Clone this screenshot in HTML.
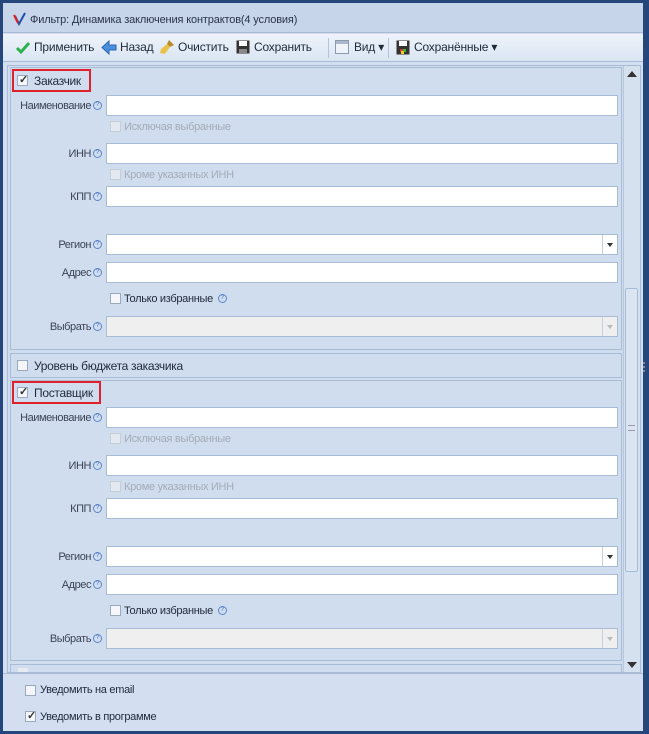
<!DOCTYPE html>
<html><head><meta charset="utf-8"><style>
*{box-sizing:border-box;margin:0;padding:0}
body{width:649px;height:734px;background:#25467a;font-family:"Liberation Sans",sans-serif;font-size:11px;color:#1e2a3a;position:relative;overflow:hidden}
.a{position:absolute}
.win{left:3px;top:3px;width:640px;height:728px;background:#d3dff0}
.inp{position:absolute;left:106px;width:512px;height:21px;background:#fff;border:1px solid #a9bcd6}
.dis{background:#efefef}
.dd{position:absolute;right:0;top:0;width:15px;height:19px;border-left:1px solid #c4d0e0}
.dd:after{content:"";position:absolute;left:4px;top:8px;border-left:3.5px solid transparent;border-right:3.5px solid transparent;border-top:4px solid #333}
.dis .dd:after{border-top-color:#bbb}
.lbl{position:absolute;right:547px;text-align:right;white-space:nowrap;color:#3a4555;letter-spacing:-0.45px}
.q{display:inline-block;width:9px;height:9px;border:1px solid #5b86c8;border-radius:50%;font-size:6px;line-height:7px;text-align:center;color:#3b6bb8;margin-left:2px;vertical-align:middle;position:relative;top:-1px;letter-spacing:0}
.cb{position:absolute;width:11px;height:11px;border:1px solid #9aa9bf;background:#f4f6f9}
.cbd{border-color:#c4cdd9;background:#e4e9f0}
.ck:after{content:"✓";position:absolute;left:1px;top:-3px;font-size:11px;font-weight:bold;color:#333}
.gt{color:#a3acb8;letter-spacing:-0.3px}
.t{letter-spacing:-0.3px}
.box{position:absolute;left:10px;width:612px;border:1px solid #a9bcd6;background:#d0ddef}
.red{position:absolute;border:2px solid #e0202a}
.tb{position:absolute;top:40px;white-space:nowrap;font-size:12px;letter-spacing:-0.2px}
</style></head><body>
<div class="a win"></div>
<div class="a" style="left:3px;top:3px;width:640px;height:30px;background:#c6d5ea;border-bottom:1px solid #a7b9d3"></div>
<svg class="a" style="left:13px;top:12px" width="14" height="14"><path d="M2 4 L6 12 L12 1" stroke="#1e4fb0" stroke-width="2" fill="none"/><path d="M1 3 L5 11" stroke="#d22" stroke-width="2"/></svg>
<div class="a" style="left:30px;top:14px;font-size:11px;color:#2a3446;letter-spacing:-0.15px">Фильтр: Динамика заключения контрактов(4 условия)</div>
<div class="a" style="left:3px;top:34px;width:640px;height:28px;background:linear-gradient(#eef3fa,#dae5f3);border-bottom:1px solid #a7b9d3"></div>
<svg class="a" style="left:15px;top:41px" width="16" height="14"><path d="M2 7 L6 11 L14 2" stroke="#2bb24c" stroke-width="3" fill="none"/></svg>
<div class="tb" style="left:34px">Применить</div>
<svg class="a" style="left:101px;top:40px" width="16" height="15"><path d="M1 7.5 L8 1 V5 H15 V10 H8 V14 Z" fill="#4a90dc" stroke="#2a65b0"/></svg>
<div class="tb" style="left:120px">Назад</div>
<svg class="a" style="left:159px;top:39px" width="16" height="16"><path d="M10 1 L15 6 L11 8 L8 5 Z" fill="#b88a2a"/><path d="M8 5 L11 8 L6 15 L1 14 L2 10 Z" fill="#e8c24a"/></svg>
<div class="tb" style="left:178px">Очистить</div>
<svg class="a" style="left:236px;top:40px" width="14" height="14"><rect x="0.5" y="0.5" width="13" height="13" fill="#333"/><rect x="3" y="1" width="8" height="5" fill="#fff"/><rect x="3" y="9" width="8" height="4" fill="#888"/></svg>
<div class="tb" style="left:254px">Сохранить</div>
<div class="a" style="left:328px;top:38px;width:1px;height:20px;background:#b5c4d8"></div>
<svg class="a" style="left:335px;top:40px" width="14" height="14"><rect x="0.5" y="0.5" width="13" height="13" fill="#eef3f9" stroke="#8a98ab"/><rect x="1" y="1" width="12" height="3" fill="#aab8cb"/></svg>
<div class="tb" style="left:354px">Вид ▾</div>
<div class="a" style="left:388px;top:38px;width:1px;height:20px;background:#b5c4d8"></div>
<svg class="a" style="left:396px;top:40px" width="14" height="15"><rect x="0.5" y="0.5" width="13" height="14" fill="#333"/><rect x="3" y="1" width="8" height="5" fill="#fff"/><rect x="4" y="9" width="3" height="3" fill="#d33"/><rect x="7" y="9" width="3" height="3" fill="#3b3"/><rect x="5" y="11" width="3" height="3" fill="#ec3"/></svg>
<div class="tb" style="left:414px">Сохранённые ▾</div>
<div class="a" style="left:7px;top:65px;width:634px;height:608px;border:1px solid #a9bcd6;background:#d0ddef"></div>
<div class="a" style="left:623px;top:66px;width:17px;height:606px;background:#d6e1f0;border-left:1px solid #b6c6dc"></div>
<div class="a" style="left:627px;top:71px;border-left:5px solid transparent;border-right:5px solid transparent;border-bottom:6px solid #333"></div>
<div class="a" style="left:627px;top:662px;border-left:5px solid transparent;border-right:5px solid transparent;border-top:6px solid #333"></div>
<div class="a" style="left:625px;top:288px;width:13px;height:284px;border:1px solid #a9bcd6;border-radius:2px;background:#dbe5f2"></div>
<div class="a" style="left:628px;top:425px;width:7px;height:6px;border-top:1px solid #99a;border-bottom:1px solid #99a"></div>
<div class="a" style="left:643px;top:362px;width:2px;height:10px;border-left:2px dotted #889"></div>

<div class="box" style="top:67px;height:283px"></div>
<div class="cb ck" style="left:17px;top:75px"></div>
<div class="a t" style="left:34px;top:74px;font-size:12px">Заказчик</div>
<div class="red" style="left:12px;top:69px;width:79px;height:23px"></div>
<div class="lbl" style="top:100px">Наименование<span class="q">?</span></div>
<div class="inp" style="top:95px"></div>
<div class="cb cbd" style="left:110px;top:121px"></div><div class="a gt" style="left:124px;top:121px">Исключая выбранные</div>
<div class="lbl" style="top:148px">ИНН<span class="q">?</span></div>
<div class="inp" style="top:143px"></div>
<div class="cb cbd" style="left:110px;top:169px"></div><div class="a gt" style="left:124px;top:169px">Кроме указанных ИНН</div>
<div class="lbl" style="top:191px">КПП<span class="q">?</span></div>
<div class="inp" style="top:186px"></div>
<div class="lbl" style="top:239px">Регион<span class="q">?</span></div>
<div class="inp" style="top:234px"><div class="dd"></div></div>
<div class="lbl" style="top:267px">Адрес<span class="q">?</span></div>
<div class="inp" style="top:262px"></div>
<div class="cb" style="left:110px;top:293px"></div><div class="a t" style="left:124px;top:293px">Только избранные <span class="q">?</span></div>
<div class="lbl" style="top:321px">Выбрать<span class="q">?</span></div>
<div class="inp dis" style="top:316px"><div class="dd"></div></div>

<div class="box" style="top:353px;height:25px"></div>
<div class="cb" style="left:17px;top:360px"></div>
<div class="a t" style="left:34px;top:359px;font-size:12px">Уровень бюджета заказчика</div>

<div class="box" style="top:380px;height:281px"></div>
<div class="cb ck" style="left:17px;top:387px"></div>
<div class="a t" style="left:34px;top:386px;font-size:12px">Поставщик</div>
<div class="red" style="left:12px;top:381px;width:89px;height:23px"></div>
<div class="lbl" style="top:412px">Наименование<span class="q">?</span></div>
<div class="inp" style="top:407px"></div>
<div class="cb cbd" style="left:110px;top:433px"></div><div class="a gt" style="left:124px;top:433px">Исключая выбранные</div>
<div class="lbl" style="top:460px">ИНН<span class="q">?</span></div>
<div class="inp" style="top:455px"></div>
<div class="cb cbd" style="left:110px;top:481px"></div><div class="a gt" style="left:124px;top:481px">Кроме указанных ИНН</div>
<div class="lbl" style="top:503px">КПП<span class="q">?</span></div>
<div class="inp" style="top:498px"></div>
<div class="lbl" style="top:551px">Регион<span class="q">?</span></div>
<div class="inp" style="top:546px"><div class="dd"></div></div>
<div class="lbl" style="top:579px">Адрес<span class="q">?</span></div>
<div class="inp" style="top:574px"></div>
<div class="cb" style="left:110px;top:605px"></div><div class="a t" style="left:124px;top:605px">Только избранные <span class="q">?</span></div>
<div class="lbl" style="top:633px">Выбрать<span class="q">?</span></div>
<div class="inp dis" style="top:628px"><div class="dd"></div></div>

<div class="a" style="left:10px;top:664px;width:612px;height:8px;border:1px solid #a9bcd6;border-bottom:none;background:#d0ddef"></div>
<div class="a" style="left:18px;top:668px;width:10px;height:4px;background:#e6ebf2"></div>

<div class="a" style="left:3px;top:673px;width:640px;height:1px;background:#a9bcd6"></div>
<div class="cb" style="left:25px;top:685px"></div><div class="a t" style="left:40px;top:684px">Уведомить на email</div>
<div class="cb ck" style="left:25px;top:711px"></div><div class="a t" style="left:40px;top:711px">Уведомить в программе</div>
</body></html>
